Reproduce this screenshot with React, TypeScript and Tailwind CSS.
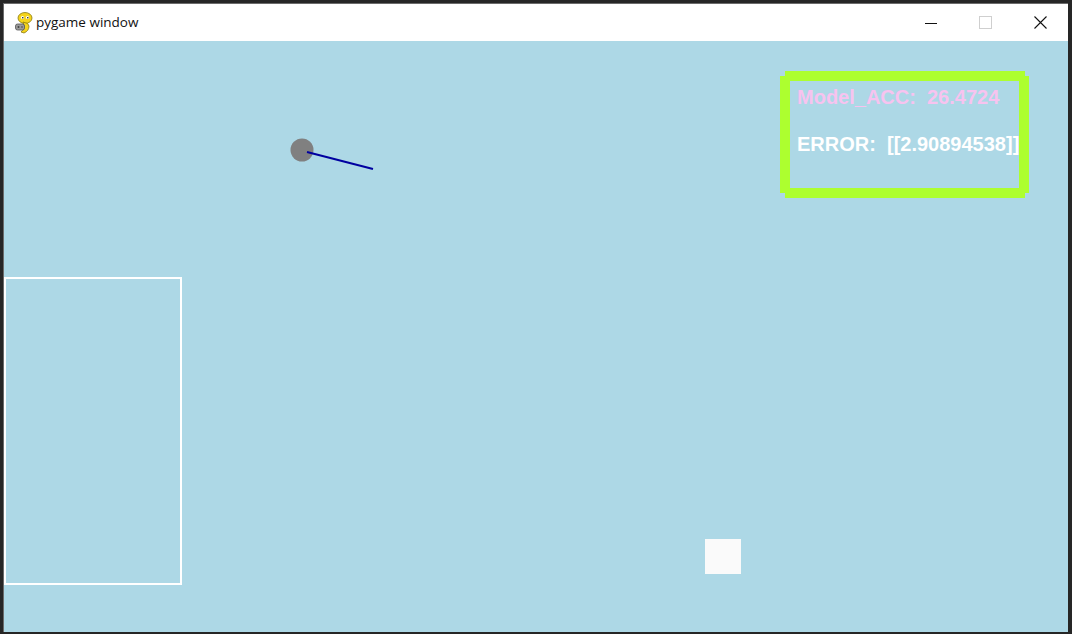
import React from 'react';

// pygame snake logo, roughly
function PygameIcon() {
  return (
    <svg width="20" height="22" viewBox="0 0 20 22">
      <ellipse cx="11" cy="6" rx="7" ry="5.5" fill="#f5d41c" stroke="#8a7a10" strokeWidth="0.8" />
      <circle cx="8.5" cy="5.5" r="1.6" fill="#fff" />
      <circle cx="13.5" cy="5.5" r="1.6" fill="#fff" />
      <circle cx="8.8" cy="5.8" r="0.8" fill="#111" />
      <circle cx="13.8" cy="5.8" r="0.8" fill="#111" />
      <path d="M9 10 Q15 11 15 14 Q15 19 10 21 L7 20 Q11 17 10 14 Z" fill="#f5d41c" stroke="#8a7a10" strokeWidth="0.8" />
      <rect x="1.5" y="12" width="9" height="6" rx="2" fill="#9a9a9a" stroke="#555" strokeWidth="0.8" />
      <circle cx="4.5" cy="15" r="1" fill="#444" />
      <circle cx="8" cy="15" r="0.8" fill="#444" />
    </svg>
  );
}

function TitleBar() {
  return (
    <div className="flex h-[37px] items-center bg-white">
      <div className="ml-[10px] flex h-full items-center">
        <PygameIcon />
      </div>
      <span
        className="ml-[2px] text-[13.5px] text-[#111]"
        style={{ fontFamily: '"Segoe UI", "Open Sans", sans-serif' }}
      >
        pygame window
      </span>
      <div className="ml-auto flex h-full">
        <div className="flex h-full w-[55px] items-center justify-center">
          <svg width="12" height="12" viewBox="0 0 12 12">
            <line x1="0" y1="6.5" x2="12" y2="6.5" stroke="#111" strokeWidth="1" />
          </svg>
        </div>
        <div className="flex h-full w-[55px] items-center justify-center">
          <svg width="13" height="13" viewBox="0 0 13 13">
            <rect x="0.5" y="0.5" width="12" height="12" fill="none" stroke="#cfcfcf" strokeWidth="1" />
          </svg>
        </div>
        <div className="flex h-full w-[55px] items-center justify-center">
          <svg width="13" height="13" viewBox="0 0 13 13">
            <path d="M0.5 0.5 L12.5 12.5 M12.5 0.5 L0.5 12.5" stroke="#111" strokeWidth="1.1" />
          </svg>
        </div>
      </div>
    </div>
  );
}

// green frame drawn pygame-style (4 thick lines, notched corners), text on top
function StatsBox({ acc, error }: { acc: string; error: string }) {
  const font = { fontFamily: '"Liberation Sans", Arial, sans-serif' };
  return (
    <div className="absolute left-[776px] top-[30px] h-[127px] w-[249px]">
      <div className="absolute left-[5px] top-0 h-[10px] w-[240px] bg-[#adff2f]" />
      <div className="absolute bottom-0 left-[5px] h-[10px] w-[240px] bg-[#adff2f]" />
      <div className="absolute left-0 top-[5px] h-[117px] w-[10px] bg-[#adff2f]" />
      <div className="absolute right-0 top-[5px] h-[117px] w-[10px] bg-[#adff2f]" />
      <div
        className="relative flex flex-col gap-[27px] pl-[17px] pt-[16px] whitespace-pre text-[20px] font-bold leading-none"
        style={font}
      >
        <div className="text-[#f7c3ef]">Model_ACC:  {acc}</div>
        <div className="text-white">ERROR:  {error}</div>
      </div>
    </div>
  );
}

export default function App() {
  return (
    <div className="h-[634px] w-[1072px] overflow-hidden bg-[#262626] pl-[3px] pt-[3px]">
      <div className="flex h-[629px] w-[1065px] flex-col border-l border-t border-[#6b6b6b]">
        <TitleBar />

        {/* pygame surface */}
        <div className="relative flex-1 bg-[#add8e6]">
          <StatsBox acc="26.4724" error="[[2.90894538]]" />

          <svg className="absolute left-0 top-0" width="1064" height="591">
            <circle cx="298" cy="109" r="11.5" fill="#808080" />
            <line x1="303" y1="111" x2="369" y2="128" stroke="#0000a0" strokeWidth="2" />
          </svg>

          <div className="absolute left-0 top-[236px] h-[308px] w-[178px] border-2 border-white" />

          <div className="absolute left-[701px] top-[498px] h-[35px] w-[36px] bg-[#fafafa]" />
        </div>
      </div>
    </div>
  );
}
